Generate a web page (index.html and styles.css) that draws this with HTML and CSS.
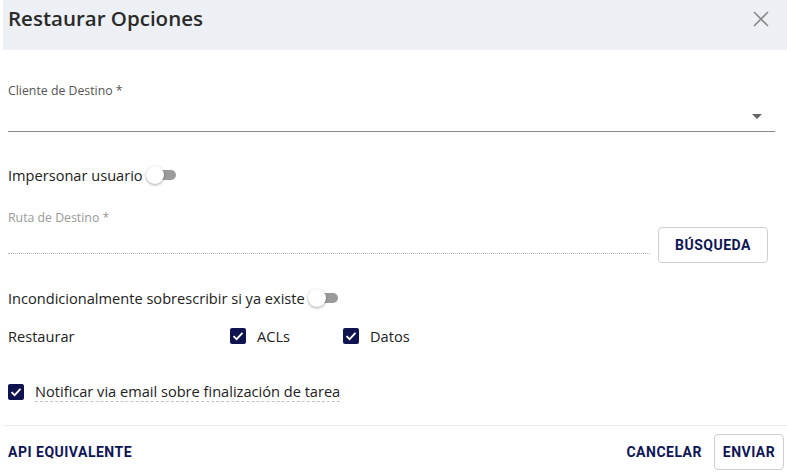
FILE: index.html
```html
<!DOCTYPE html>
<html lang="es">
<head>
<meta charset="utf-8">
<title>Restaurar Opciones</title>
<link rel="stylesheet" href="styles.css">
</head>
<body>
<div class="dialog">
  <header class="dialog-header">
    <h1 class="dialog-title">Restaurar Opciones</h1>
    <button class="close-btn" aria-label="Cerrar">
      <svg width="18" height="18" viewBox="0 0 18 18"><path d="M2 2L16 16M16 2L2 16" stroke="#8a8a8a" stroke-width="1.6" fill="none"/></svg>
    </button>
  </header>

  <div class="dialog-body">
    <div class="field select-field">
      <label class="field-label">Cliente de Destino *</label>
      <div class="select-input">
        <span class="select-arrow"></span>
      </div>
    </div>

    <div class="toggle-row row-impersonate">
      <span class="row-text">Impersonar usuario</span>
      <span class="toggle"><span class="toggle-knob"></span></span>
    </div>

    <div class="path-row">
      <div class="field path-field">
        <label class="field-label muted">Ruta de Destino *</label>
        <div class="path-input"></div>
      </div>
      <button class="outline-btn search-btn">BÚSQUEDA</button>
    </div>

    <div class="toggle-row row-overwrite">
      <span class="row-text">Incondicionalmente sobrescribir si ya existe</span>
      <span class="toggle"><span class="toggle-knob"></span></span>
    </div>

    <div class="restore-row">
      <span class="row-text restore-label">Restaurar</span>
      <label class="check check-acl"><span class="check-box"><svg width="12" height="10" viewBox="0 0 12 10"><path d="M1.5 5.2L4.6 8.2L10.5 1.8" stroke="#fff" stroke-width="1.8" fill="none"/></svg></span><span class="row-text">ACLs</span></label>
      <label class="check"><span class="check-box"><svg width="12" height="10" viewBox="0 0 12 10"><path d="M1.5 5.2L4.6 8.2L10.5 1.8" stroke="#fff" stroke-width="1.8" fill="none"/></svg></span><span class="row-text">Datos</span></label>
    </div>

    <div class="notify-row">
      <label class="check check-top"><span class="check-box"><svg width="12" height="10" viewBox="0 0 12 10"><path d="M1.5 5.2L4.6 8.2L10.5 1.8" stroke="#fff" stroke-width="1.8" fill="none"/></svg></span><span class="row-text notify-text">Notificar via email sobre finalización de tarea</span></label>
    </div>
  </div>

  <footer class="dialog-footer">
    <button class="text-btn">API EQUIVALENTE</button>
    <div class="footer-actions">
      <button class="text-btn">CANCELAR</button>
      <button class="outline-btn send-btn">ENVIAR</button>
    </div>
  </footer>
</div>
</body>
</html>
```

FILE: styles.css
```css
* { box-sizing: border-box; }

html, body {
  margin: 0;
  padding: 0;
  background: #fff;
}

body {
  font-family: "Open Sans", "Noto Sans", sans-serif;
  color: #222;
}

.dialog {
  width: 787px;
  height: 472px;
  padding-left: 3px;
  display: flex;
  flex-direction: column;
}

.dialog-header {
  flex: 0 0 50px;
  background: #edf0f5;
  display: flex;
  justify-content: space-between;
  align-items: flex-start;
  padding: 6px 17px 0 5px;
}

.dialog-title {
  margin: 0;
  font-size: 20.5px;
  font-weight: 600;
  color: #2a2a2a;
  line-height: 24px;
}

.close-btn {
  border: 0;
  background: none;
  padding: 0;
  margin-top: 4px;
  width: 18px;
  height: 18px;
  cursor: pointer;
}

.dialog-body {
  flex: 1;
  padding: 34px 12px 0 5px;
}

.field-label {
  display: block;
  font-size: 12.3px;
  color: #555;
  line-height: 14px;
}
.field-label.muted { color: #9a9a9a; }

.select-input {
  height: 34px;
  border-bottom: 1px solid #888;
  position: relative;
}

.select-arrow {
  position: absolute;
  right: 13px;
  top: 16px;
  width: 0;
  height: 0;
  border-left: 5px solid transparent;
  border-right: 5px solid transparent;
  border-top: 5px solid #666;
}

.row-text {
  font-size: 14.6px;
  color: #222;
  line-height: 18px;
}

.toggle-row {
  display: flex;
  align-items: center;
  height: 20px;
}
.row-impersonate { margin-top: 33px; }

.toggle {
  position: relative;
  width: 30px;
  height: 20px;
  display: inline-block;
  margin-left: 3px;
}
.toggle::before {
  content: "";
  position: absolute;
  left: 5px;
  top: 5px;
  width: 25px;
  height: 10px;
  border-radius: 5px;
  background: #9b9b9b;
}
.toggle-knob {
  position: absolute;
  left: 0;
  top: 1px;
  width: 18px;
  height: 18px;
  border-radius: 50%;
  background: #fff;
  box-shadow: 0 1px 3px rgba(0,0,0,0.35);
}

.path-row {
  display: flex;
  align-items: flex-end;
  margin-top: 26px;
}
.path-field {
  flex: 0 0 642px;
}
.path-input {
  height: 29px;
  border-bottom: 1px dotted #b5b5b5;
}

.outline-btn {
  font-family: Roboto, "Liberation Sans", sans-serif;
  font-weight: 700;
  font-size: 14px;
  letter-spacing: 0.5px;
  color: #0d1555;
  background: #fff;
  border: 1px solid #cfcfcf;
  border-radius: 4px;
  padding: 0;
  cursor: pointer;
}
.search-btn {
  width: 110px;
  height: 36px;
  margin-left: 8px;
  margin-bottom: -9px;
}

.row-overwrite { margin-top: 34px; }

.restore-row {
  display: flex;
  align-items: center;
  margin-top: 19px;
  height: 18px;
}
.restore-label { width: 222px; }

.check {
  display: inline-flex;
  align-items: center;
}
.check-acl { width: 113px; }
.check-top { align-items: flex-start; }
.check-top .check-box { margin-top: 2px; }

.check-box {
  flex: 0 0 16px;
  width: 16px;
  height: 16px;
  border-radius: 2px;
  background: #0f1350;
  display: inline-flex;
  align-items: center;
  justify-content: center;
  margin-right: 11px;
}

.notify-row { margin-top: 35px; }
.notify-text {
  border-bottom: 1px dashed #c4c4c4;
  padding-bottom: 1px;
}

.dialog-footer {
  flex: 0 0 47px;
  border-top: 1px solid #ececec;
  display: flex;
  justify-content: space-between;
  align-items: flex-start;
  padding: 8px 3px 0 5px;
}

.text-btn {
  font-family: Roboto, "Liberation Sans", sans-serif;
  font-weight: 700;
  font-size: 14px;
  letter-spacing: 0.5px;
  color: #0d1555;
  background: none;
  border: 0;
  padding: 0;
  height: 36px;
  cursor: pointer;
}

.footer-actions {
  display: flex;
  align-items: flex-start;
}
.send-btn {
  width: 70px;
  height: 36px;
  margin-left: 12px;
}
```
